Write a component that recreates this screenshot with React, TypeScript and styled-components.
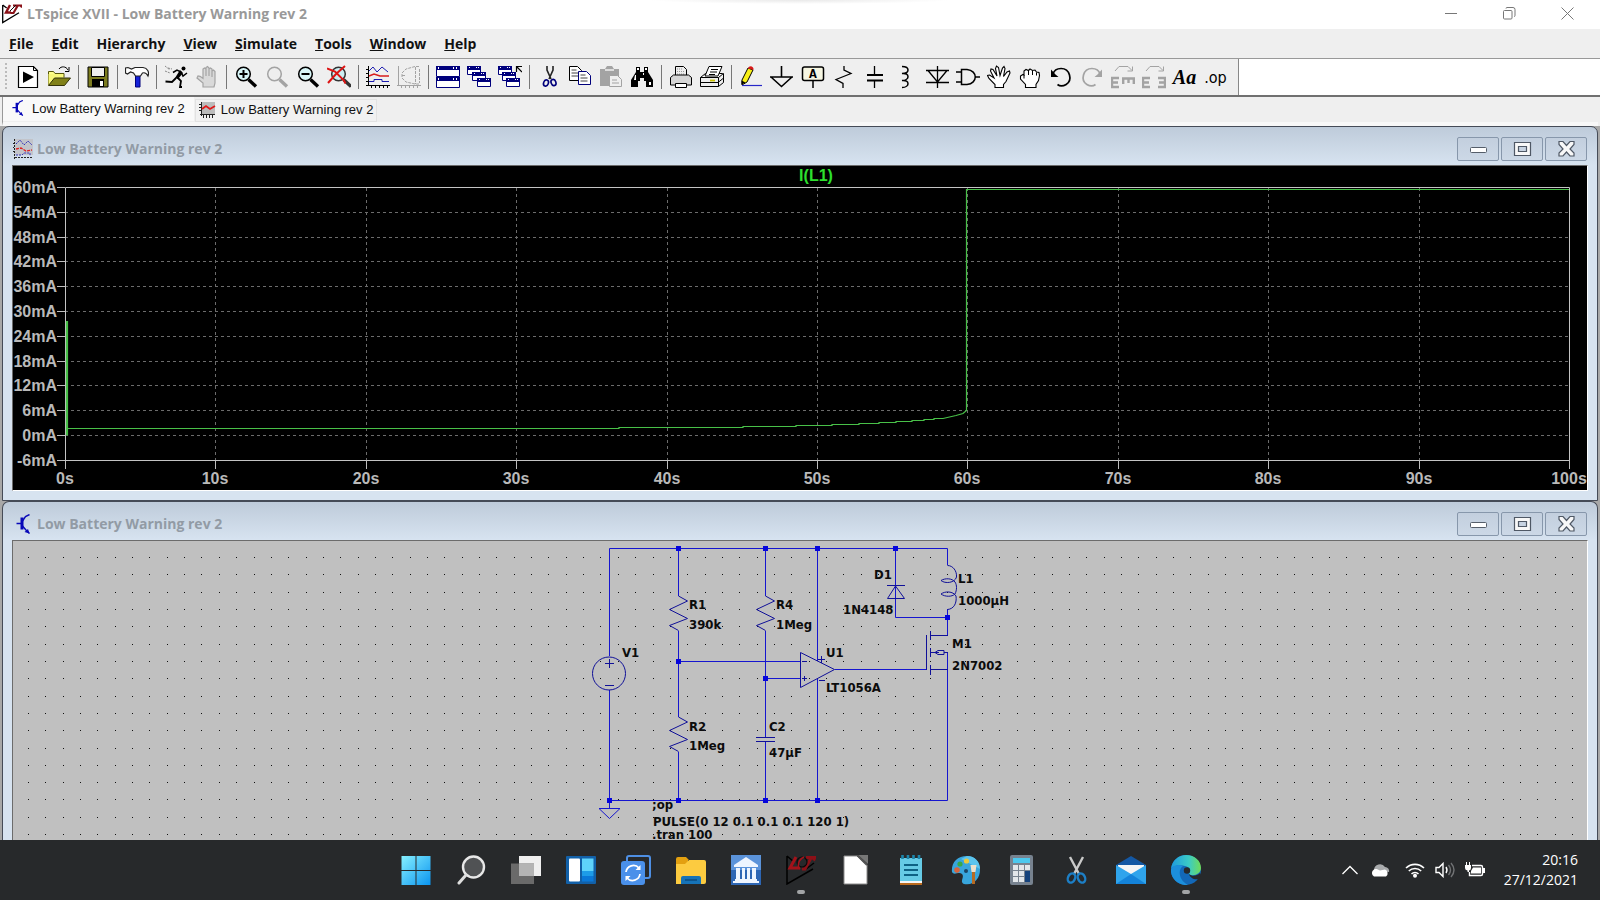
import React from "react";
import styled, { createGlobalStyle, css } from "styled-components";

const GlobalStyle = createGlobalStyle`
  * { box-sizing: border-box; }
  body { margin: 0; background: #f0f0f0; font-family: "Open Sans", "Noto Sans", sans-serif; }
  button { font: inherit; color: inherit; background: none; border: 0; padding: 0; margin: 0; cursor: default; }
  svg { display: block; }
`;

const Shell = styled.div`
  display: flex;
  flex-direction: column;
  height: 100vh;
  overflow: hidden;
  background: #efefef;
`;

/* ---------- title bar ---------- */
const TitleBar = styled.header`
  display: flex;
  align-items: center;
  height: 29px;
  flex: none;
  padding: 0 4px 2px 2px;
  background: radial-gradient(ellipse 150px 4px at 50% 0, #e9e9e9, #fff);
`;
const AppTitle = styled.h1`
  flex: 1;
  margin: 0 0 0 5px;
  font-size: 14px;
  line-height: 20px;
  font-weight: 700;
  color: #999;
`;
const SystemButton = styled.button`
  display: grid;
  place-items: center;
  width: 58px;
  height: 27px;
  color: #777;
`;
const SystemButtons = styled.div`
  display: flex;
`;

/* ---------- menu ---------- */
const MenuBar = styled.nav`
  display: flex;
  flex: none;
  height: 30px;
  border-bottom: 1px solid #999;
`;
const MenuItem = styled.button`
  padding: 0 9px;
  font-size: 14px;
  line-height: 28px;
  font-weight: 700;
  color: #111;
`;

/* ---------- toolbar ---------- */
const ToolRow = styled.div`
  display: flex;
  flex: none;
  height: 38px;
  background: #fff;
  border-bottom: 2px solid #707070;
`;
const Tools = styled.div`
  display: flex;
  align-items: center;
  background: #efefef;
  border-right: 1px solid #888;
  padding-right: 7px;
`;
const Grip = styled.span`
  width: 2px;
  height: 28px;
  margin: 0 5px;
  background: repeating-linear-gradient(#bbb 0 2px, transparent 2px 4px);
`;
const ToolButton = styled.button`
  display: grid;
  place-items: center;
  width: 31px;
  height: 30px;
`;
const ToolSeparator = styled.span`
  width: 1px;
  height: 24px;
  margin: 0 3px 0 4px;
  background: #777;
`;
const GlyphLabel = styled.span`
  font: italic 700 20px "Liberation Serif", serif;
  color: #000;
`;
const OpLabel = styled.span`
  font: 400 16px "DejaVu Sans Condensed", "DejaVu Sans", sans-serif;
  color: #000;
`;

/* ---------- document tabs ---------- */
const TabStrip = styled.div`
  display: flex;
  align-items: flex-start;
  flex: none;
  height: 29px;
  margin: 0 2px;
  gap: 1px;
  border-left: 1px solid #999;
  border-bottom: 4px solid #f8f8f8;
`;
const Tab = styled.button<{ $active?: boolean }>`
  display: flex;
  align-items: center;
  gap: ${(p) => (p.$active ? 7 : 5)}px;
  height: ${(p) => (p.$active ? 24 : 23)}px;
  margin-top: ${(p) => (p.$active ? 0 : 2)}px;
  padding: 0 ${(p) => (p.$active ? 9 : 3)}px 2px ${(p) => (p.$active ? 8 : 3)}px;
  font-family: "Liberation Sans", Arial, sans-serif;
  font-size: 13px;
  color: #111;
  background: ${(p) => (p.$active ? "#f9f9f9" : "#f1f1f1")};
  ${(p) => !p.$active && css`border: 1px solid #e2e2e2;`}
`;

/* ---------- child windows ---------- */
const Workspace = styled.main`
  display: flex;
  flex-direction: column;
  flex: 1;
  min-height: 0;
  padding: 0 2px;
  background: #a8a8a8;
`;
const ChildFrame = styled.section<{ $share: number; $open?: boolean }>`
  display: flex;
  flex-direction: column;
  flex: ${(p) => p.$share} 1 ${(p) => p.$share}px;
  min-height: 0;
  padding: 0 9px ${(p) => (p.$open ? 0 : 9)}px;
  border: 1px solid #454b57;
  border-bottom-width: ${(p) => (p.$open ? 0 : 1)}px;
  border-radius: 7px 7px 0 0;
  background: linear-gradient(#becbda, #d7e3f0 38px);
`;
const ChildTitle = styled.div`
  display: flex;
  align-items: center;
  flex: none;
  gap: 3px;
  height: 38px;
  padding: 5px 1px 0 1px;
`;
const ChildName = styled.h2`
  flex: 1;
  margin: 0;
  font-size: 14px;
  line-height: 20px;
  font-weight: 700;
  color: #929ba5;
`;
const CaptionButtons = styled.div`
  display: flex;
  gap: 2px;
  align-self: flex-start;
  padding-top: 5px;
`;
const CaptionButton = styled.button`
  display: grid;
  place-items: center;
  width: 42px;
  height: 24px;
  border: 1px solid #8797ab;
  border-radius: 2px;
  background: linear-gradient(#c3cfde, #ccd8e6);
`;
const ClientArea = styled.div<{ $tone: string; $open?: boolean }>`
  flex: 1;
  min-height: 0;
  overflow: hidden;
  background: ${(p) => p.$tone};
  border: 1px solid #fff;
  border-top-color: #6c6c6c;
  border-left-color: #6c6c6c;
  border-bottom-width: ${(p) => (p.$open ? 0 : 1)}px;
  svg { width: 100%; }
`;

/* ---------- taskbar ---------- */
const Taskbar = styled.footer`
  display: grid;
  grid-template-columns: 1fr auto 1fr;
  align-items: center;
  flex: none;
  height: 60px;
  background: #27292b;
  color: #fff;
`;
const Pinned = styled.div`
  display: flex;
  grid-column: 2;
  padding-left: 2px;
`;
const TaskButton = styled.button<{ $running?: boolean }>`
  display: grid;
  justify-items: center;
  align-content: start;
  gap: 5px;
  width: 55px;
  height: 60px;
  padding-top: 15px;
  &::after {
    content: "";
    width: 8px;
    height: 4px;
    border-radius: 2px;
    background: ${(p) => (p.$running ? "#a2a4a6" : "transparent")};
  }
`;
const Tray = styled.div`
  display: flex;
  align-items: center;
  justify-content: flex-end;
  padding-right: 22px;
`;
const TrayButton = styled.button`
  display: grid;
  place-items: center;
  width: 30px;
  height: 40px;
`;
const TrayGap = styled.span`
  width: 5px;
`;
const Clock = styled.button`
  margin-left: 14px;
  font-size: 14px;
  line-height: 20px;
  text-align: right;
  time { display: block; }
`;

/* ---------- small drawings ---------- */
const LtLogo = ({ size = 20 }: { size?: number }) => (
  <svg width={size} height={size} viewBox="0 0 20 20" fill="none">
    <path d="M.7 1v17.600L17 8.700M.7 1l4 3" stroke="#000" strokeWidth="1.300" />
    <path d="M8 1L4 8.500h5" stroke="#8a1118" strokeWidth="2.400" />
    <path d="M11 1.500h9l-1 2M15.500 2l-4 7h-3" stroke="#8a1118" strokeWidth="2.200" />
    <path d="M8 7l6-6" stroke="#111" strokeWidth="1" />
  </svg>
);

const Transistor = ({ w, h }: { w: number; h: number }) => (
  <svg width={w} height={h} viewBox="0 0 16 20" fill="none" stroke="#0808b8">
    <path d="M1 9.500h6M14 .5L10 2.500 7 7M7 12l3 3.500 4 4" strokeWidth="1.400" />
    <path d="M6.500 3.500v12" strokeWidth="3" />
    <path d="M12.500 15l1.500 4.500-5-1.500z" fill="#0808b8" stroke="none" />
  </svg>
);

const PlotTabIcon = () => (
  <svg width="17" height="16" viewBox="0 0 17 16" fill="none">
    <path d="M3 0h13v12H3z" fill="#bcbcbc" />
    <path d="M2.500 0v14M0 2.500h2M0 5.500h2M0 8.500h2M1 12.500h15M4.500 13v3M7.500 13v3M10.500 13v3M13.500 13v3" stroke="#222" />
    <path d="M3 7l4-3 4 3 5-3" stroke="#e01818" strokeWidth="1.800" />
  </svg>
);

const PlotWindowIcon = () => (
  <svg width="21" height="20" viewBox="0 0 21 20" fill="none">
    <path d="M2 0h18v16H2z" fill="#c2c4ca" />
    <path d="M1.500 0v20M0 4.500h1M0 8.500h1M0 12.500h1M2 18.500h18" stroke="#222" strokeDasharray="2 1" />
    <path d="M3 5l4-4 4 5 4-4 4 4M3 16h6l2-2h6v3" stroke="#3434b8" strokeDasharray="2 1" />
    <path d="M3 10l5-1 5 3 6-1" stroke="#d22" strokeDasharray="3 1" strokeWidth="1.400" />
  </svg>
);

const K = "#000";
const G = "#a3a3a3";
const N = "#00007c";

const Lens = ({ c, glass, children }: { c: string; glass: string; children?: React.ReactNode }) => (
  <>
    <circle cx="9.500" cy="9" r="6.800" fill={glass} stroke={c} strokeWidth="1.500" />
    <path d="M14.500 14.500l7.500 7" stroke={c} strokeWidth="3.400" />
    {children}
  </>
);

const MiniWin = ({ x, y }: { x: number; y: number }) => (
  <g>
    <path d={`M${x + 0.5} ${y + 0.5}h13v8h-13z`} fill="#fff" stroke={N} />
    <path d={`M${x} ${y}h14v4h-14z`} fill={N} />
    <path d={`M${x + 2} ${y + 1.5}h1m6 0h1m1 0h1`} stroke="#fff" />
  </g>
);

const Prongs = ({ x, flip }: { x: number; flip?: boolean }) => (
  <path d={flip ? `M${x} 13h7v9h-7M${x + 1} 17.500h6` : `M${x + 8} 13h-7v9h7M${x + 1} 17.500h6`} stroke={G} strokeWidth="2.400" />
);

type Tool = { label: string; art: React.ReactNode; html?: boolean } | null;

const tools: Tool[] = [
  { label: "New schematic", art: <><path d="M2.500 1.500h15l4 4v17h-19z" fill="#fff" stroke={K} strokeWidth="1.200" /><path d="M17.500 1.500v4h4" stroke={K} /><path d="M7 6.500v11.500l11-6z" fill={K} /></> },
  { label: "Open", art: <><path d="M1.500 20V6.500h5l1.500 2h9v4" fill="#ffff8c" stroke="#55550a" /><path d="M1.500 20V9h14v4z" fill="#f7f77a" /><path d="M1.500 20.500l6-7.500h16l-6 7.500z" fill="#808018" stroke="#33330a" /><path d="M12 4c2-3 7-3 9 1M22 2v4.500h-4" stroke={K} /></> },
  null,
  { label: "Save", art: <><path d="M2 2h20v20H2z" fill="#7c7c20" stroke={K} /><path d="M5.500 2.500h13v9h-13z" fill="#efefef" stroke={K} /><path d="M6 14h12v8H6z" fill={K} /><path d="M14 16h3v5h-3z" fill="#fff" /></> },
  null,
  { label: "Control panel", art: <><path d="M10.500 10h4.500v12h-4.500z" fill="#1420d8" stroke="#00007c" /><path d="M.5 3v5l2 1 3-2 3 1 2 3h5l2-3c3-1 4.500 1 5.500 3 1.500-4-.5-8-5-8.500H10L6.500 4 3 2.500z" fill="#fff" stroke="#222" strokeWidth="1.200" /></> },
  null,
  { label: "Run", art: <><circle cx="19.500" cy="3.500" r="2" fill={K} /><path d="M9 7.500l4-2.500 4 2 2 4 4-3" stroke={K} strokeWidth="1.500" /><path d="M13 12l4 4-1 6h2M12 13l-4 4-6.500-.5" stroke={K} strokeWidth="1.800" /><path d="M1 1l5 4M1 6l5 2M4 3l4 1" stroke="#888" strokeDasharray="2 1" /><path d="M16 5l-5 8 3 1 5-6z" fill={K} /></> },
  { label: "Halt", art: <path d="M8 22v-4l-6-5 1-2 2 .3 3 2V4l1.500-1L11 4v7-8.500L12.500 1.500 14 3v8-7l1.500-1L17 4v8-6l1.500-1L20 6.500V18l-1 4z" fill="#d9d9d9" stroke={G} strokeWidth="1.200" /> },
  null,
  { label: "Zoom in", art: <Lens c={K} glass="#d8f6f8"><path d="M5.500 9h8M9.500 5v8" stroke={K} strokeWidth="2" /></Lens> },
  { label: "Pan", art: <Lens c={G} glass="#eee" /> },
  { label: "Zoom out", art: <Lens c={K} glass="#d8f6f8"><path d="M5.500 9h8" stroke={K} strokeWidth="2" /></Lens> },
  { label: "Zoom full extents", art: <><g transform="translate(2 0)"><Lens c="#333" glass="#cdeef2" /></g><path d="M0 3.500l8 3 9 9 1.500 3M18 1L9 9 1 18" stroke="#dd1414" strokeWidth="2" /></> },
  null,
  { label: "Autorange", art: <><path d="M2.500 1v20M0 20.500h24M0 4.500h2M0 8.500h2M0 12.500h2M0 16.500h2M5.500 21v2M9.500 21v2M13.500 21v2M17.500 21v2M21.500 21v2" stroke={K} /><path d="M3 6l4-4 4 5 5-5 6 5M3 16.500h5v-2h8v2h7" stroke="#1c1cb0" /><path d="M3 11l5-2 6 2 9 0" stroke="#d81c1c" strokeWidth="1.400" /></> },
  { label: "Pick visible traces", art: <><path d="M1.500 1v20M0 20.500h24M4.500 21v2M8.500 21v2M12.500 21v2M16.500 21v2M20.500 21v2" stroke={G} /><path d="M22 1.500h-4L9 4 5 8v5l4 4 9 2h4M18.500 2v17M5 10.500h4M22.500 4v14" stroke={G} strokeDasharray="3 1" /></> },
  null,
  { label: "Tile windows", art: <><path d="M.5 1.500h23v10H.5zM.5 12.500h23v10H.5z" fill="#fff" stroke={N} /><path d="M0 1h24v4H0zM0 12h24v4H0z" fill={N} /><path d="M2 3h1M17 3h1M20 3h1M2 14h1M17 14h1M20 14h1" stroke="#fff" strokeWidth="2" /></> },
  { label: "Cascade windows", art: <><MiniWin x={0} y={1} /><MiniWin x={5} y={7} /><MiniWin x={10} y={13} /></> },
  { label: "Close all windows", art: <><MiniWin x={0} y={1} /><MiniWin x={4} y={7} /><MiniWin x={8} y={13} /><path d="M18.500 7V1.500H24M19 2l5 5" stroke={K} strokeWidth="1.200" /></> },
  null,
  { label: "Cut", art: <><path d="M10 1v4l4 9M16 1v4l-4 9" stroke="#222" strokeWidth="1.600" /><ellipse cx="9" cy="18" rx="2.400" ry="3.200" transform="rotate(20 9 18)" stroke={N} strokeWidth="1.600" /><ellipse cx="16.500" cy="17.500" rx="2.400" ry="3.200" transform="rotate(-20 16.500 17.500)" stroke={N} strokeWidth="1.600" /></> },
  { label: "Copy", art: <><path d="M1.500 1.500h8l4 4v10h-12z" fill="#fff" stroke={K} /><path d="M3.500 5h5M3.500 8h7M3.500 11h7" stroke="#444" /><path d="M10.500 6.500h8l4 4v9h-12z" fill="#fff" stroke={N} /><path d="M12.500 10h5M12.500 13h7M12.500 16h7" stroke="#444" /></> },
  { label: "Paste", art: <><path d="M1 4h5l2-3h5l2 3h5v17H1z" fill={G} /><path d="M6 5h9" stroke="#ddd" strokeWidth="2" /><path d="M10.500 10.500h8l4 4v7h-12z" fill="#efefef" stroke={G} /><path d="M13 15h5M13 18h7" stroke={G} /></> },
  { label: "Find", art: <><path d="M6 2h4v5h4V2h4v5l5 8v7h-7v-6h-2v-3h-4v3H8v6H1v-7l5-8z" fill={K} /><path d="M7 3h2v2H7zM15 3h2v2h-2zM5 10h1v5H4zM13 8h1v2h-1zM19 17h2v3h-2z" fill="#fff" /></> },
  null,
  { label: "Print", art: <><path d="M6.500 11V1.500h8l3 3V11" fill="#eee" stroke={K} /><path d="M8 4h6M8 6.500h8M8 9h8" stroke="#999" strokeDasharray="1 1" /><path d="M1.500 12.500l3-2.500h15l3 2.500v7.500h-21z" fill="#d6d6d6" stroke={K} /><path d="M6.500 18.500h11v4h-11z" fill="#fff" stroke={K} /></> },
  { label: "Print setup", art: <><path d="M.5 12.500l5-4h17l1 1-4 4h-18z" fill="#fff" stroke={K} /><path d="M5 11l4-9.500h13L18 11z" fill="#fff" stroke={K} /><path d="M11 4.500h7M10 7h7M9 9.500h6" stroke={K} /><path d="M.5 12.500h18v9H.5zM18.500 12.500l5-4v9l-5 4M1 17.500h17l5-4" fill="#eee" stroke={K} /><path d="M10 15.500h5" stroke="#c8c000" strokeWidth="1.800" /></> },
  null,
  { label: "Wire", art: <><path d="M3 15L9 3l5 2-6 12-5 3z" fill="#f8f018" stroke={K} /><path d="M2.500 19.500v-4l4 2z" fill={K} /><path d="M9 3.500C10 0 15 1 14.500 5z" fill="#d81818" /><path d="M3 20.500h20" stroke="#2828c8" strokeWidth="1.200" /></> },
  { label: "Ground", art: <><path d="M11.500 1v11M0 12h23M1 12l10.500 9.500L22 12" stroke={K} strokeWidth="1.600" /></> },
  { label: "Label net", art: <><rect x="1.500" y="2" width="21" height="13.500" rx="2" fill="#f6f6e2" stroke={K} strokeWidth="1.500" /><path d="M12 16v7" stroke={K} strokeWidth="1.500" /><text x="12" y="13" textAnchor="middle" fontFamily="Liberation Mono, monospace" fontWeight="700" fontSize="13" fill={K}>A</text></> },
  { label: "Resistor", art: <path d="M12 1v4l7 3.500-15 6 7 4V23" stroke={K} strokeWidth="1.300" /> },
  { label: "Capacitor", art: <><path d="M11.500 1v9M11.500 16v7" stroke={K} strokeWidth="1.300" /><path d="M4 10h16M4 15.500h16" stroke={K} strokeWidth="2.200" /></> },
  { label: "Inductor", art: <path d="M8 1.500c8 0 8 7 0 7 8-1 8 7 0 7 8-1 8 7 0 7" stroke={K} strokeWidth="1.500" /> },
  { label: "Diode", art: <path d="M12.500 1v22M1 5.500h23M1 17.500h23M3 5.500l9.500 11.500L22 5.500" stroke={K} strokeWidth="1.300" /> },
  { label: "Component", art: <><path d="M0 7h6M0 17h6M19 12h5" stroke={K} strokeWidth="1.400" /><path d="M5.500 4.500H11c11 1 11 14 0 15H5.500z" stroke={K} strokeWidth="1.500" /></> },
  { label: "Move", art: <><path d="M8 22.500v-3l-6-6-1.500-3 2-.5L7 13 3.500 6l.5-2 2 .5L10 11 8.500 3.500 9.500 1l2 1.500 1.500 8L15.500 3l1.500-1.500 1 2-1.500 8L20 7l2.500-1 .5 2-4 8.500-2.500 3v3z" fill="#fff" stroke={K} strokeWidth="1.100" /></> },
  { label: "Drag", art: <><path d="M7.500 22.500v-3l-5-5.500v-3l2.500-1.500 1 .5V6l2-1.500 2.500 1L12 4l2.500 1.500L17 5l1.500 2 2.500.5.500 3-1 5-2.500 4v3z" fill="#fff" stroke={K} strokeWidth="1.100" /><path d="M6 10v3.500M10.500 6v4M14.500 6v4M18.500 7.500v3" stroke={K} /></> },
  { label: "Undo", art: <><path d="M4 9c2-7 14-8 16.500 1S13 23 8.500 19.500" stroke={K} strokeWidth="1.700" /><path d="M2 4.500v7.500h7.500L6.500 9.500z" fill={K} /></> },
  { label: "Redo", art: <><path d="M20 9C18 2 6 1 3.500 10S11 23 15.500 19.500" stroke={G} strokeWidth="1.700" /><path d="M22 4.500v7.500h-7.500l3-2.500z" fill={G} /></> },
  { label: "Rotate", art: <><Prongs x={0} /><path d="M11 13.500h13M12.200 19v-6M17.500 18v-5M22.800 19v-6" stroke={G} strokeWidth="2.400" /><path d="M4 6l4-4.500h9l4 4M21.500 1.500V6h-5" stroke={G} /></> },
  { label: "Mirror", art: <><Prongs x={0} /><Prongs x={16} flip /><path d="M4 6l4-4.500h9l4 4M21.500 1.500V6h-5" stroke={G} /></> },
  { label: "Text", html: true, art: <GlyphLabel>Aa</GlyphLabel> },
  { label: "SPICE directive", html: true, art: <OpLabel>.op</OpLabel> },
];

const menus: [string, number][] = [["File", 0], ["Edit", 0], ["Hierarchy", 1], ["View", 0], ["Simulate", 0], ["Tools", 0], ["Window", 0], ["Help", 0]];

/* ---------- waveform plot ---------- */
const PlotText = styled.text<{ $trace?: boolean }>`
  font: 700 16px "Liberation Sans", Arial, sans-serif;
  fill: ${(p) => (p.$trace ? "#2ee02e" : "#b9b9b9")};
`;
const amps = ["60mA", "54mA", "48mA", "42mA", "36mA", "30mA", "24mA", "18mA", "12mA", "6mA", "0mA", "-6mA"];
const ampY = (i: number) => Math.round(187 + i * 24.8) + 0.5;
const timeX = (i: number) => Math.round(65 + i * 150.4) + 0.5;

const Waveform = () => (
  <svg viewBox="13 166 1574 324" role="img" aria-label="Current through L1 over time" fill="none">
    <PlotText $trace x="816" y="181" textAnchor="middle">I(L1)</PlotText>
    {amps.map((a, i) => (
      <g key={a}>
        <PlotText x="57" y={ampY(i) + 5.5} textAnchor="end">{a}</PlotText>
        <path d={`M57 ${ampY(i)}H65`} stroke="#bdbdbd" />
        {i > 0 && i < 11 && <path d={`M65 ${ampY(i)}H1569`} stroke="#6c6c6c" strokeDasharray="3 3" />}
      </g>
    ))}
    {Array.from({ length: 11 }, (_, i) => (
      <g key={i}>
        {i > 0 && i < 10 && <path d={`M${timeX(i)} 188V460`} stroke="#6c6c6c" strokeDasharray="3 3" />}
        <path d={`M${timeX(i)} 460v9`} stroke="#bdbdbd" />
        <PlotText x={timeX(i) - 0.5} y="484" textAnchor="middle">{`${i * 10}s`}</PlotText>
      </g>
    ))}
    <path d="M65.500 187.500H1569.500V460.500H65.500z" stroke="#c4c4c4" />
    <path
      d="M66.500 435V321.500H67.500V435.500V428.500H619V427.500H743V426.500H796V425.500H832V424.500H859V423.500H879V422.500H896V421.500H912V420.500H924V419.500H934V418.500H943L956 415.500 963 413.500 966.500 410.500V189.500H1569"
      stroke="#48c048"
      strokeWidth="1.200"
    />
  </svg>
);

/* ---------- schematic ---------- */
const PartText = styled.text`
  font: 700 13px "DejaVu Sans Condensed", "DejaVu Sans", sans-serif;
  fill: #0c0c0c;
`;
const parts: [string, number, number][] = [
  ["V1", 622, 657], ["R1", 689, 609], ["390k", 689, 629], ["R4", 776, 609], ["1Meg", 776, 629],
  ["R2", 689, 731], ["1Meg", 689, 750], ["C2", 769, 731], ["47µF", 769, 757], ["U1", 826, 657],
  ["LT1056A", 826, 692], ["D1", 874, 579], ["1N4148", 843, 614], ["L1", 958, 583], ["1000µH", 958, 605],
  ["M1", 952, 648], ["2N7002", 952, 670], [";op", 652, 809], ["PULSE(0 12 0.1 0.1 0.1 120 1)", 653, 826], [".tran 100", 652, 839],
];
const nodes: [number, number][] = [
  [678, 548], [765, 548], [817, 548], [895, 548], [947, 617], [678, 661], [765, 678],
  [609, 800], [678, 800], [765, 800], [817, 800],
];
const gridDots = Array.from({ length: 17 }, (_, r) =>
  Array.from({ length: 90 }, (_, c) => `M${Math.round(28 + c * 17.348)} ${Math.round(557 + r * 17.32)}h1v1h-1z`).join("")
).join("");
const zigzag = (x: number, y: number) => `M${x} ${y}l9 5-18 8.500 18 9-18 7 9 5`;

const Schematic = () => (
  <svg viewBox="13 541 1574 299" role="img" aria-label="Low battery warning circuit" fill="none">
    <path d={gridDots} fill="#111" />
    <path
      d="M609.500 656V548.500H947.500V565M609.500 690V808M609.500 800.500H947.500V652M678.500 548V596M678.500 631V717M678.500 752V800M765.500 548V596M765.500 631V737M765.500 742V800M678.500 661.500H800M765.500 678.500H800M817.500 548V661M817.500 679V800M895.500 548V617.500H947.500M947.500 609V635M835 669.500H926"
      stroke="#1515cf"
    />
    <g stroke="#101098">
      <circle cx="609" cy="673.500" r="16.500" />
      <path d="M605 663.500h9M609.500 659v9M605 685.500h9" />
      <path d={zigzag(678.5, 596)} />
      <path d={zigzag(765.5, 596)} />
      <path d={zigzag(678.5, 717)} />
      <path d="M756 737.500h19M756 741.500h19" />
      <path d="M599 808.500h21l-10.500 10z" stroke="#1515cf" />
      <path d="M800.500 652.500v35l34-18z" />
      <path d="M802 661.500h5M802 678.500h5M804.500 676v5M818 659.500h7M821.500 656v7M819 680.500h6" />
      <path d="M887 585.500h18M895.500 586l-8 12.500h17z" />
      <path d="M947.500 565.500C953 565.500 957 571 956.500 577C955 583 945 584 941 580.500C945 578 952 578 955 582C957 585 957 590 955 594C952 597 945 597 941 594C945 591 953 591 956 596C957 603 954 609 947.500 609.500" />
      <path d="M926.500 635v35M930.500 631v9M930.500 648v9M930.500 665v10M930 635.500h18M930 652.500h9M944 652.500h4M930 669.500h18M935 652.500l3-2h6v4h-6z" />
    </g>
    {nodes.map(([x, y]) => (
      <rect key={`${x}-${y}`} x={x - 2} y={y - 2} width="5" height="5" fill="#0505dc" />
    ))}
    {parts.map(([t, x, y]) => (
      <PartText key={`${t}-${x}-${y}`} x={x} y={y}>{t}</PartText>
    ))}
  </svg>
);

/* ---------- taskbar drawings ---------- */
const apps: { name: string; running?: boolean; art: React.ReactNode }[] = [
  { name: "Start", art: <><defs><linearGradient id="st" x1="0" y1="0" x2="1" y2="1"><stop stopColor="#86f0ff" /><stop offset="1" stopColor="#0a94f0" /></linearGradient></defs><path d="M.5 1h14v14H.5zM15.500 1h14v14h-14zM.5 16h14v14H.5zM15.500 16h14v14h-14z" fill="url(#st)" /></> },
  { name: "Search", art: <><circle cx="17.500" cy="12" r="10.500" fill="#505254" stroke="#e8e8e8" strokeWidth="2.400" /><path d="M10 20l-7 8" stroke="#dedede" strokeWidth="3" strokeLinecap="round" /></> },
  { name: "Task view", art: <><path d="M8 1h22v20H8z" fill="#efefef" /><path d="M0 8.500h23V29H0z" fill="#6a6a6a" /><path d="M8 8.500h15V21H8z" fill="#b4b4b4" /></> },
  { name: "Widgets", art: <><rect y="1" width="30" height="28" rx="1" fill="#1260a8" /><rect x="3" y="3.500" width="11" height="23" rx="1" fill="#fff" /><path d="M16 3.500h11.500v12.500H16z" fill="#5fd3fa" /><path d="M16 16h11.500v5H16z" fill="#1d9ce8" /><path d="M16 21h11.500v5.500H16z" fill="#0a78d8" /></> },
  { name: "Sync", art: <><rect x="6" y="1" width="23" height="22" rx="2" stroke="#4e8fe4" strokeWidth="2" /><rect y="6" width="24" height="24" rx="3" fill="#4a90ea" /><path d="M5 17a7.500 7.500 0 0 1 13-4M19 19a7.500 7.500 0 0 1-13 4" stroke="#fff" strokeWidth="1.800" /><path d="M19.500 10v5h-5zM4.500 26v-5h5z" fill="#fff" /></> },
  { name: "File Explorer", art: <><path d="M0 4q0-2 2-2h8l3 3h-1v5H0z" fill="#e3a010" /><path d="M0 9h9l4-4h15q2 0 2 2v20q0 2-2 2H0z" fill="#fccb40" /><path d="M5 29v-6q0-2 2-2h16q2 0 2 2v6z" fill="#1673b8" /><path d="M9 25h12" stroke="#0d558e" strokeWidth="2" /></> },
  { name: "Bank", art: <><path d="M0 0h30v15H0z" fill="#5b93da" /><path d="M0 15h30v15H0z" fill="#2d66b4" /><path d="M15 2L3 10v2h24v-2zM5 13h4v11H5zM11 13h3v11h-3zM16 13h3v11h-3zM21 13h4v11h-4zM4 24h22v2H4zM2 26h26v2H2z" fill="#eef5ff" /></> },
  { name: "LTspice XVII", running: true, art: <><path d="M1 1v28l26-15M1 1l7 6M20 14l8-6" stroke="#000" strokeWidth="1.500" /><path d="M10 2L4 13h10" stroke="#a3121a" strokeWidth="3" /><path d="M20 2.500h9l-1.500 3M25 3l-6 11h-3" stroke="#8d1017" strokeWidth="3" /><circle cx="16" cy="7" r="5" stroke="#0a0a0a" strokeWidth="1.200" /><path d="M14 14c-3-3-2-9 4-12" stroke="#a3121a" strokeWidth="1.500" /></> },
  { name: "LibreOffice", art: <><path d="M3 1h13l10 9v19H3z" fill="#fff" stroke="#8c8c8c" /><path d="M17 0h10v9z" fill="#777" /><path d="M16 1h1l9 9" stroke="#555" strokeWidth="2" /></> },
  { name: "Notepad", art: <><path d="M4 3h22v23H4z" fill="#66cbe6" /><path d="M4 26h22v2H4z" fill="#f4f4f4" /><path d="M4 28h22v2H4z" fill="#b9691c" /><path d="M8 10h14M8 15h14M8 20h14" stroke="#0e6285" strokeWidth="2" /><path d="M6.500 0v4M12 0v4M17.500 0v4M23 0v4" stroke="#1c86ac" strokeWidth="2.600" /></> },
  { name: "Paint", art: <><path d="M16 1C6 1 0 8 1 17c2 4 7-1 10 2s-3 8 2 10c10 2 16-6 16-14S24 1 16 1z" fill="#38a5dc" /><path d="M16 1c8 0 13 6 13 13L10 4z" fill="#5cc4ee" /><circle cx="6" cy="15" r="2.800" fill="#d8643c" /><circle cx="9" cy="9" r="2.600" fill="#37a849" /><circle cx="15.500" cy="6" r="2.600" fill="#e8c93c" /><circle cx="15" cy="16" r="2" fill="#1b4666" /><path d="M22.500 15v14" stroke="#b76b24" strokeWidth="3" /><path d="M19.500 10h6l-1 7h-4z" fill="#ece0cc" /></> },
  { name: "Calculator", art: <><rect x="4" width="23" height="30" rx="2" fill="#77828f" /><path d="M7 3h17v5H7z" fill="#4cc8ee" /><path d="M7 10h5v5H7zM13 10h5v5h-5zM19 10h5v5h-5zM7 16h5v5H7zM13 16h5v5h-5zM7 22h5v5H7zM13 22h5v5h-5z" fill="#e2e6ea" /><path d="M19 16h5v11h-5z" fill="#15427c" /></> },
  { name: "Snipping Tool", art: <><path d="M9 2l9 17M22 2l-9 17" stroke="#c9c9c9" strokeWidth="2.400" /><ellipse cx="10.500" cy="23" rx="3.500" ry="4.800" transform="rotate(25 10.500 23)" stroke="#1d7fc6" strokeWidth="2.400" /><ellipse cx="20.500" cy="23" rx="3.500" ry="4.800" transform="rotate(-25 20.500 23)" stroke="#1d7fc6" strokeWidth="2.400" /></> },
  { name: "Mail", art: <><path d="M0 10L15 1l15 9v5H0z" fill="#1458a4" /><path d="M2 10h26v8L15 24 2 17z" fill="#f5f5f5" /><path d="M0 10l15 9 15-9v19H0z" fill="#2fa4ec" /><path d="M0 29l15-10 15 10z" fill="#1483da" /><path d="M3 10h24l-12 8z" fill="#f5f5f5" /></> },
  { name: "Edge", running: true, art: <><defs><linearGradient id="ed" x1="0" y1="0" x2="1" y2="0"><stop stopColor="#1e9be0" /><stop offset=".6" stopColor="#3ccbc4" /><stop offset="1" stopColor="#6fdc58" /></linearGradient></defs><circle cx="15" cy="15" r="15" fill="#1368b8" /><path d="M0 14C1 5 8 0 15 0c9 0 15 6 15 13 0 6-8 9-12 6 2-3 1-7-4-8C7 9 1 12 0 14z" fill="url(#ed)" /><path d="M0 14c2-4 8-5 12-3-5 3-5 14 5 19C7 31-1 23 0 14z" fill="#1c8fdc" /><path d="M18 19c3 3 8 2 11-1l1 2-2 4c-5 1-9-1-10-5z" fill="#27292b" /><circle cx="16" cy="15.500" r="3.200" fill="#27292b" /></> },
];

const captionArt: [string, React.ReactNode][] = [
  ["Minimize", <rect x="2.500" y="7.500" width="16" height="5" rx="1" fill="#fff" stroke="#555e6a" />],
  ["Maximize", <path d="M2.500 2.500h16v13h-16zM6.500 6.500h8v5h-8z" fill="#f8f8f8" fillRule="evenodd" stroke="#4f5865" strokeWidth="1.200" />],
  ["Close", <path d="M3 1.500h4l3.500 4 3.500-4h4v3l-4 4.500 4 4v3h-4l-3.500-4-3.500 4H3v-3l4-4-4-4.500z" fill="#f8f8f8" stroke="#4f5865" strokeWidth="1.200" />],
];

const ChildWindow = (p: { icon: React.ReactNode; share: number; tone: string; open?: boolean; children: React.ReactNode }) => (
  <ChildFrame $share={p.share} $open={p.open}>
    <ChildTitle>
      {p.icon}
      <ChildName>Low Battery Warning rev 2</ChildName>
      <CaptionButtons>
        {captionArt.map(([label, art]) => (
          <CaptionButton key={label} aria-label={label}>
            <svg width="21" height="18" viewBox="0 0 21 18">{art}</svg>
          </CaptionButton>
        ))}
      </CaptionButtons>
    </ChildTitle>
    <ClientArea $tone={p.tone} $open={p.open}>{p.children}</ClientArea>
  </ChildFrame>
);

const MenuLabel = ({ text, at }: { text: string; at: number }) => (
  <>{text.slice(0, at)}<u>{text[at]}</u>{text.slice(at + 1)}</>
);

export default function App() {
  return (
    <Shell>
      <GlobalStyle />
      <TitleBar>
        <LtLogo />
        <AppTitle>LTspice XVII - Low Battery Warning rev 2</AppTitle>
        <SystemButtons>
          <SystemButton aria-label="Minimize"><svg width="12" height="12"><path d="M0 5.500h12" stroke="currentColor" /></svg></SystemButton>
          <SystemButton aria-label="Restore"><svg width="13" height="13" fill="none" stroke="currentColor"><rect x=".5" y="3.500" width="8.500" height="8.500" rx="1" /><path d="M3 1.500q0-1 1-1h6q2 0 2 2v6q0 1-1 1" /></svg></SystemButton>
          <SystemButton aria-label="Close"><svg width="13" height="13"><path d="M.5.5l12 12m0-12l-12 12" stroke="currentColor" /></svg></SystemButton>
        </SystemButtons>
      </TitleBar>
      <MenuBar aria-label="Main menu">
        {menus.map(([m, at]) => <MenuItem key={m}><MenuLabel text={m} at={at} /></MenuItem>)}
      </MenuBar>
      <ToolRow>
        <Tools role="toolbar" aria-label="Tools">
          <Grip />
          {tools.map((t, i) =>
            t ? (
              <ToolButton key={t.label} aria-label={t.label}>
                {t.html ? t.art : <svg width="24" height="24" viewBox="0 0 24 24" fill="none">{t.art}</svg>}
              </ToolButton>
            ) : (
              <ToolSeparator key={i} />
            )
          )}
        </Tools>
      </ToolRow>
      <TabStrip role="tablist">
        <Tab role="tab" aria-selected="true" $active><Transistor w={14} h={16} />Low Battery Warning rev 2</Tab>
        <Tab role="tab" aria-selected="false"><PlotTabIcon />Low Battery Warning rev 2</Tab>
      </TabStrip>
      <Workspace>
        <ChildWindow icon={<PlotWindowIcon />} share={375} tone="#000"><Waveform /></ChildWindow>
        <ChildWindow icon={<Transistor w={21} h={20} />} share={339} tone="#c0c0c0" open><Schematic /></ChildWindow>
      </Workspace>
      <Taskbar>
        <Pinned>
          {apps.map((a) => (
            <TaskButton key={a.name} aria-label={a.name} $running={a.running}>
              <svg width="30" height="30" viewBox="0 0 30 30" fill="none">{a.art}</svg>
            </TaskButton>
          ))}
        </Pinned>
        <Tray>
          <TrayButton aria-label="Show hidden icons"><svg width="16" height="10" fill="none"><path d="M.5 9L8 1.500 15.500 9" stroke="#fff" strokeWidth="1.300" /></svg></TrayButton>
          <TrayButton aria-label="OneDrive"><svg width="20" height="14"><path d="M4 7a6 6 0 0 1 11-3 4 4 0 0 1 4 5L6 8z" fill="#a9abad" /><path d="M4 13.500a4 4 0 0 1 0-7c2-1 4 0 6 1l5-1a4 4 0 0 1 1 7z" fill="#fff" /></svg></TrayButton>
          <TrayGap />
          <TrayButton aria-label="Wi-Fi"><svg width="20" height="16" fill="none" stroke="#fff" strokeWidth="1.600"><path d="M1 6a13 13 0 0 1 18 0M3.800 9a9 9 0 0 1 12.400 0M6.500 12a5 5 0 0 1 7 0" /><circle cx="10" cy="13.800" r="1.200" fill="#fff" /></svg></TrayButton>
          <TrayButton aria-label="Volume"><svg width="20" height="16" fill="none" strokeWidth="1.400"><path d="M1 5.500h3l4-4v13l-4-4H1z" stroke="#fff" /><path d="M11 5q2 3 0 6" stroke="#fff" /><path d="M13.500 3q4 5 0 10M16 1q6 7 0 14" stroke="#707274" /></svg></TrayButton>
          <TrayButton aria-label="Battery charging"><svg width="20" height="16" fill="none"><path d="M7 3.500h9q1.500 0 1.500 1.500v7q0 1.500-1.500 1.500H4.500V10" stroke="#fff" strokeWidth="1.400" /><path d="M8 5.500h8v6H6V9zM18 6h2v5h-2z" fill="#fff" /><path d="M0 3h6v3q0 2-2 2.500V10H2.500V8.500Q0 8 0 6zM1 0h1v3H1zM4 0h1v3H4z" fill="#fff" /></svg></TrayButton>
          <Clock aria-label="Clock"><time>20:16</time><time>27/12/2021</time></Clock>
        </Tray>
      </Taskbar>
    </Shell>
  );
}
